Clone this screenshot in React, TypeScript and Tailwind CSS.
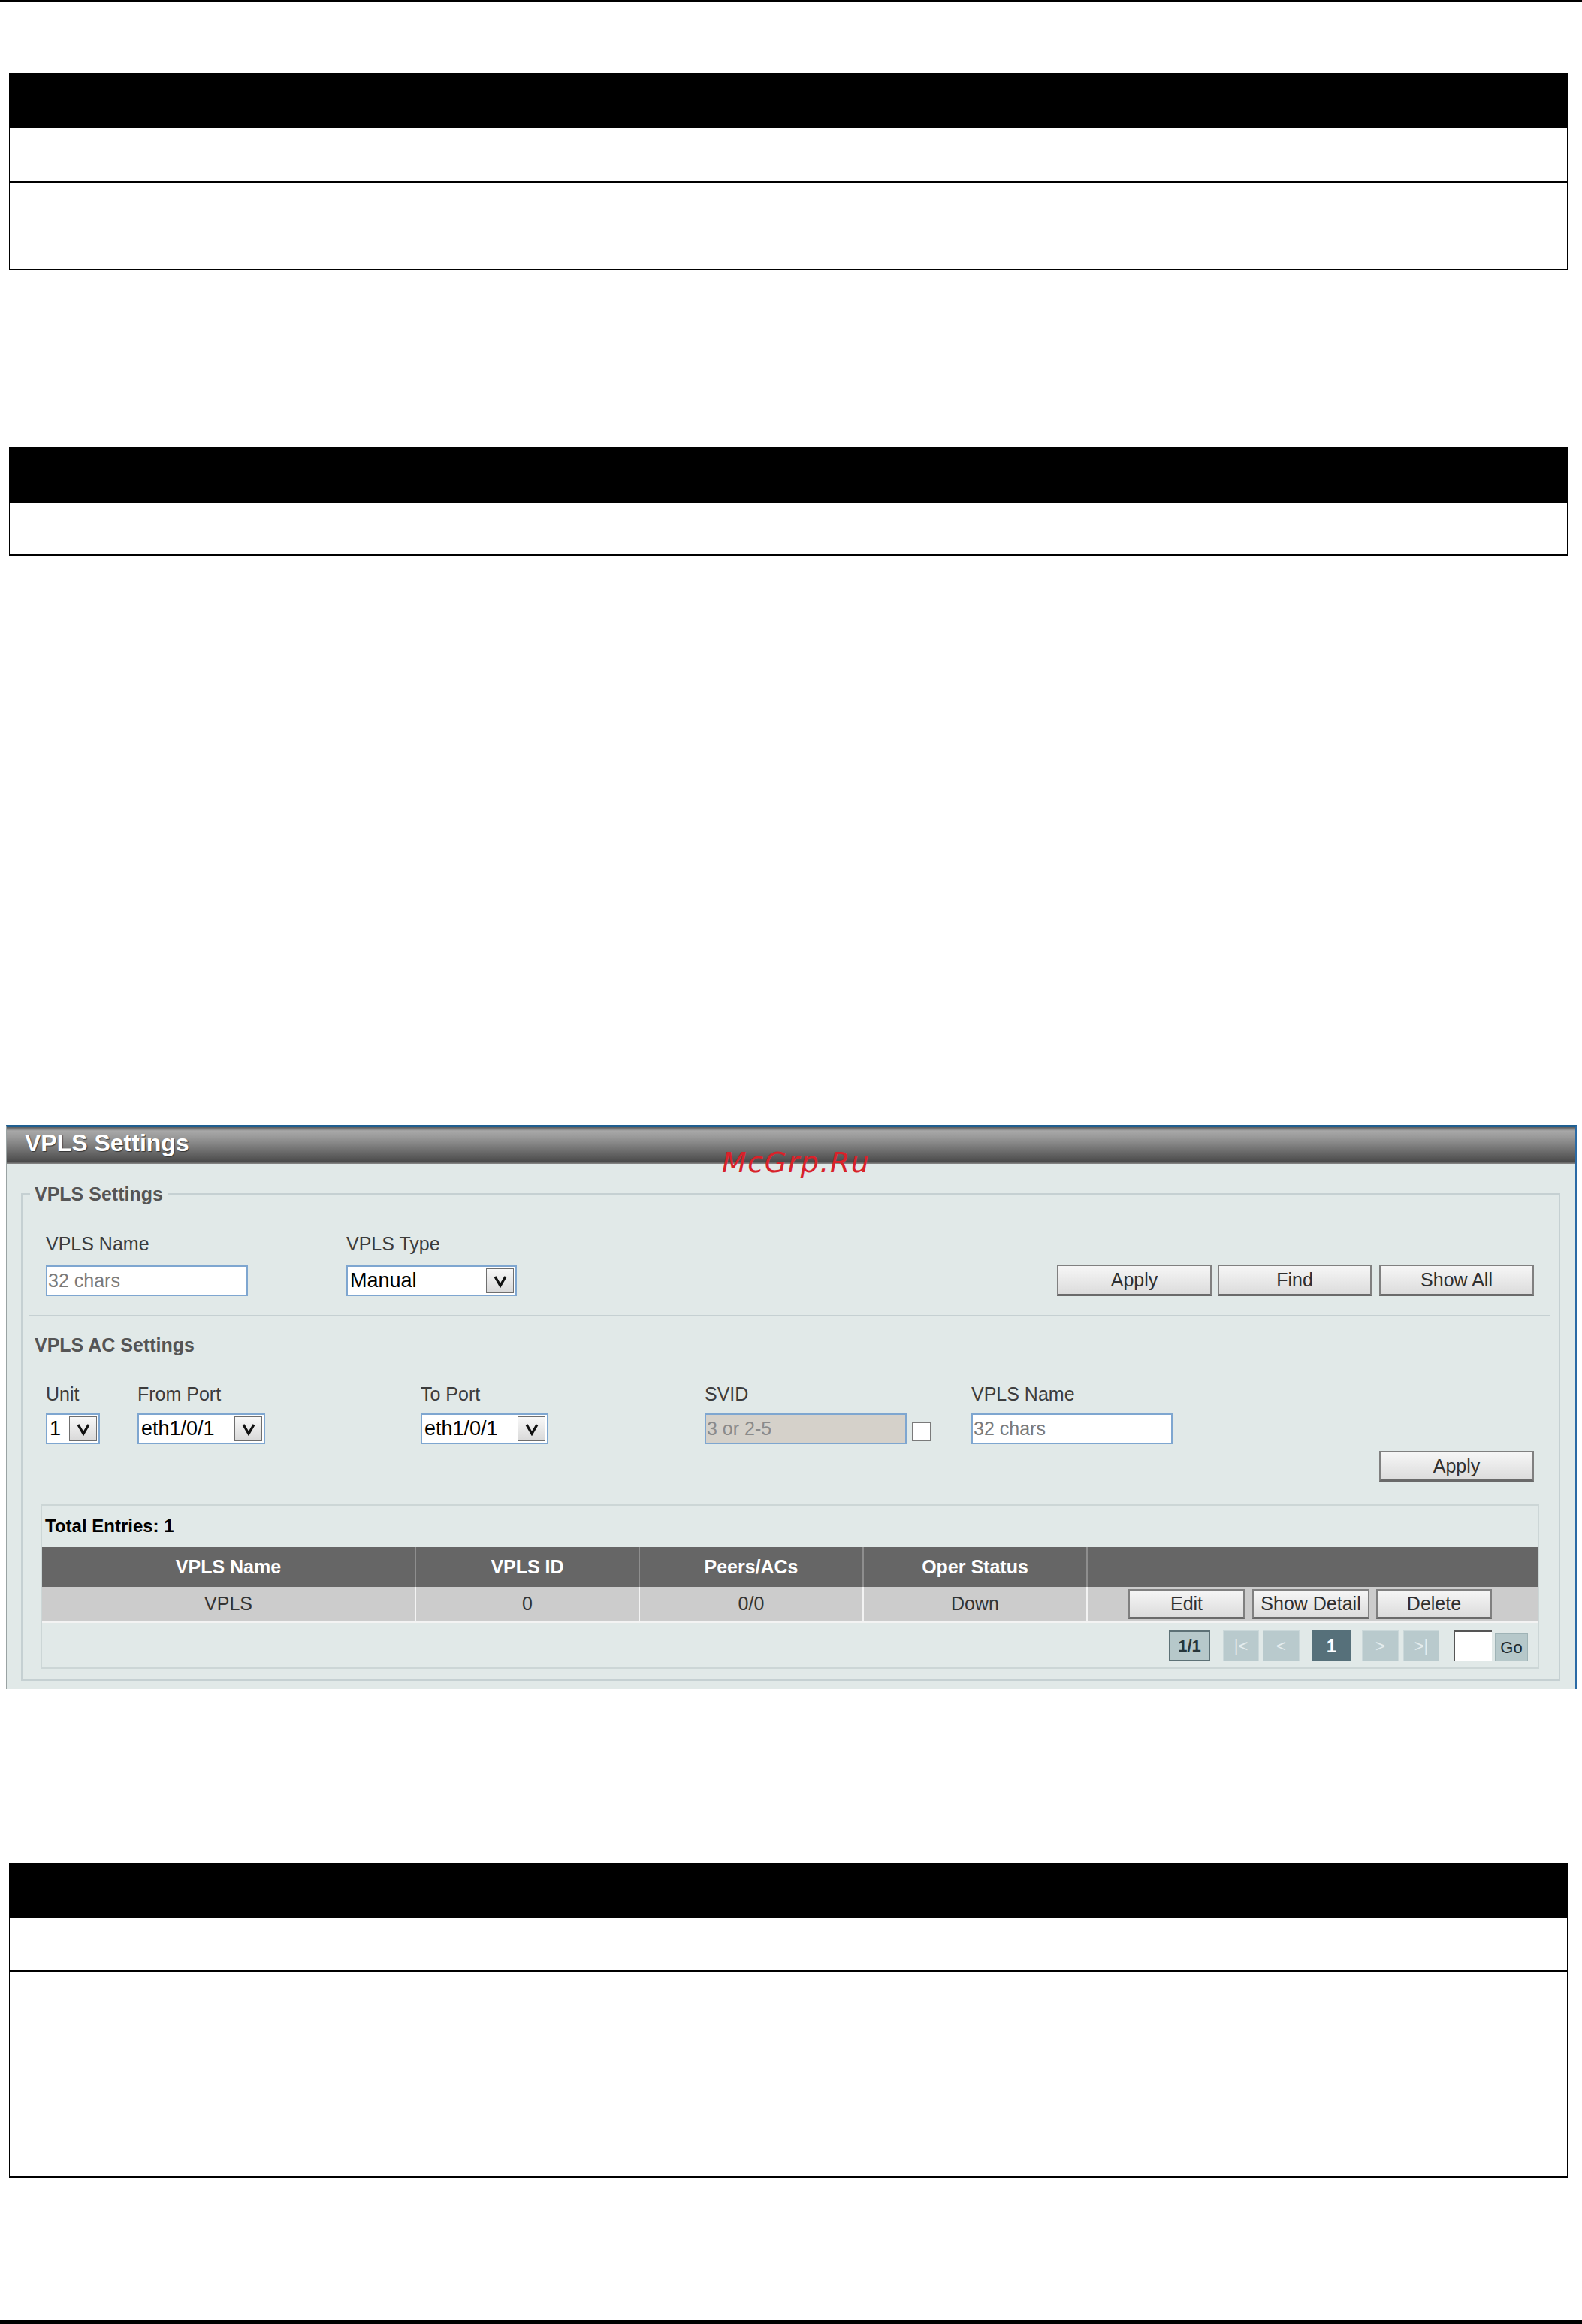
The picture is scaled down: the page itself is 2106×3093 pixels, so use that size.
import React from 'react';

// VPLS Settings page (manual screenshot) with the surrounding blank doc tables.

function Chevron() {
  return (
    <svg width="20" height="18" viewBox="0 0 20 18" className="block">
      <polyline points="3,3 10,15 17,3" fill="none" stroke="#111" strokeWidth="3.4" strokeLinejoin="miter" />
    </svg>
  );
}

function Select({ value, w }: { value: string; w: string }) {
  return (
    <div className={`${w} h-[41px] flex items-center bg-white border-2 border-[#7ea6d0] pl-[3px]`}>
      <span className="text-[27px] leading-none text-black">{value}</span>
      <span className="ml-auto mr-[2px] w-[37px] h-[33px] flex items-center justify-center border border-[#6f6f6f] bg-[linear-gradient(to_bottom,#f8f8f8,#d9d9d9)]">
        <Chevron />
      </span>
    </div>
  );
}

function TextBox({ text, w, disabled }: { text: string; w: string; disabled?: boolean }) {
  return (
    <div
      className={`${w} h-[41px] flex items-center border-2 border-[#7ea6d0] pl-[1px] text-[25px] leading-none ${
        disabled ? 'bg-[#d5d1ca] text-[#8a8a8a]' : 'bg-white text-[#7a7a7a]'
      }`}
    >
      {text}
    </div>
  );
}

function Btn({ label, w, h = 'h-[42px]' }: { label: string; w: string; h?: string }) {
  return (
    <div
      className={`${w} ${h} flex items-center justify-center border-2 border-[#808080] border-b-[3px] border-b-[#6a6a6a] bg-[linear-gradient(to_bottom,#f6f6f6,#dcdcdc)] text-[25px] leading-none text-[#2f2f2f]`}
    >
      {label}
    </div>
  );
}

function Label({ children }: { children: React.ReactNode }) {
  return <div className="text-[25px] leading-[28px] text-[#3c3c3c]">{children}</div>;
}

export default function App() {
  return (
    <div className="w-[2106px] h-[3093px] bg-white flex flex-col font-['Liberation_Sans',Arial,sans-serif] overflow-hidden">
      <div className="h-[3px] bg-black" />

      {/* table 1 */}
      <div className="mt-[94px] ml-[12px] w-[2076px] border-l border-r-2 border-black">
        <div className="h-[73px] bg-black" />
        <div className="grid grid-cols-[576px_1fr] h-[73px] border-b-2 border-black">
          <div className="border-r border-black" />
          <div />
        </div>
        <div className="grid grid-cols-[576px_1fr] h-[117px] border-b-2 border-black">
          <div className="border-r border-black" />
          <div />
        </div>
      </div>

      {/* table 2 */}
      <div className="mt-[235px] ml-[12px] w-[2076px] border-l border-r-2 border-black">
        <div className="h-[74px] bg-black" />
        <div className="grid grid-cols-[576px_1fr] h-[71px] border-b-[3px] border-black">
          <div className="border-r border-black" />
          <div />
        </div>
      </div>

      {/* VPLS Settings panel */}
      <div className="relative mt-[757px] ml-[8px] w-[2091px] h-[751px] bg-[#e1e9e8] border-t-[3px] border-t-[#1f5f90] border-r-2 border-r-[#2a6aa5] border-l border-l-[#9aa3a3]">
        <div className="h-[49px] pl-[24px] pt-[5px] bg-[linear-gradient(to_bottom,#5c5c5c_0px,#a8a8a8_5px,#9a9a9a_13px,#505050_44px,#4a4a4a_46px,#8a8a8a_49px)]">
          <span className="text-[32px] leading-[32px] font-bold text-white [text-shadow:1px_1px_1px_#333]">VPLS Settings</span>
        </div>

        <span className="absolute left-[952px] top-[28px] text-[38px] leading-none italic text-[#d8222a] tracking-[1.5px] font-['DejaVu_Sans',sans-serif]">
          McGrp.Ru
        </span>

        <div className="pt-[26px] pl-[19px] pr-[20px]">
          <fieldset className="border-2 border-[#c5d0d2] pb-[14px]">
            <legend className="ml-[10px] px-[6px] text-[25px] leading-[28px] font-bold text-[#555]">VPLS Settings</legend>

            <div className="pl-[31px] pr-[33px] pt-[38px] flex items-end">
              <div className="w-[400px]">
                <Label>VPLS Name</Label>
                <div className="mt-[15px]">
                  <TextBox text="32 chars" w="w-[269px]" />
                </div>
              </div>
              <div>
                <Label>VPLS Type</Label>
                <div className="mt-[15px]">
                  <Select value="Manual" w="w-[227px]" />
                </div>
              </div>
              <div className="ml-auto flex">
                <Btn label="Apply" w="w-[206px]" />
                <div className="ml-[8px]">
                  <Btn label="Find" w="w-[205px]" />
                </div>
                <div className="ml-[10px]">
                  <Btn label="Show All" w="w-[206px]" />
                </div>
              </div>
            </div>

            <div className="ml-[9px] mr-[12px] mt-[25px] h-[2px] bg-[#c5d0d2]" />

            <div className="pl-[16px] mt-[24px] text-[25px] leading-[28px] font-bold text-[#555]">VPLS AC Settings</div>

            <div className="pl-[31px] pr-[33px] mt-[37px]">
              <div className="flex">
                <div className="w-[122px]">
                  <Label>Unit</Label>
                  <div className="mt-[12px]">
                    <Select value="1" w="w-[72px]" />
                  </div>
                </div>
                <div className="w-[377px]">
                  <Label>From Port</Label>
                  <div className="mt-[12px]">
                    <Select value="eth1/0/1" w="w-[170px]" />
                  </div>
                </div>
                <div className="w-[378px]">
                  <Label>To Port</Label>
                  <div className="mt-[12px]">
                    <Select value="eth1/0/1" w="w-[170px]" />
                  </div>
                </div>
                <div className="w-[355px]">
                  <Label>SVID</Label>
                  <div className="mt-[12px] flex items-end">
                    <TextBox text="3 or 2-5" w="w-[269px]" disabled />
                    <div className="ml-[7px] mb-[4px] w-[26px] h-[26px] bg-white border-2 border-[#7a7a7a]" />
                  </div>
                </div>
                <div>
                  <Label>VPLS Name</Label>
                  <div className="mt-[12px]">
                    <TextBox text="32 chars" w="w-[268px]" />
                  </div>
                </div>
              </div>
              <div className="mt-[9px] flex justify-end">
                <Btn label="Apply" w="w-[206px]" h="h-[41px]" />
              </div>
            </div>

            <div className="ml-[24px] mr-[26px] mt-[30px] border-2 border-[#ccd6d6] pt-[13px] pb-[8px]">
              <div className="pl-[4px] text-[24px] leading-[28px] font-bold text-black">Total Entries: 1</div>

              <div className="mt-[14px] grid grid-cols-[498px_298px_298px_298px_1fr]">
                {['VPLS Name', 'VPLS ID', 'Peers/ACs', 'Oper Status', ''].map((h, i) => (
                  <div
                    key={i}
                    className={`h-[53px] bg-[#666666] flex items-center justify-center text-[25px] font-bold text-white ${
                      i < 4 ? 'border-r-2 border-[#8e8e8e]' : ''
                    }`}
                  >
                    {h}
                  </div>
                ))}
                {['VPLS', '0', '0/0', 'Down'].map((c, i) => (
                  <div
                    key={i}
                    className="h-[48px] bg-[#cccccc] border-r-2 border-b-2 border-[#f3f3f3] flex items-center justify-center text-[25px] text-[#333]"
                  >
                    {c}
                  </div>
                ))}
                <div className="h-[48px] bg-[#cccccc] border-b-2 border-[#f3f3f3] flex items-center pl-[54px]">
                  <Btn label="Edit" w="w-[155px]" h="h-[40px]" />
                  <div className="ml-[10px]">
                    <Btn label="Show Detail" w="w-[156px]" h="h-[40px]" />
                  </div>
                  <div className="ml-[9px]">
                    <Btn label="Delete" w="w-[154px]" h="h-[40px]" />
                  </div>
                </div>
              </div>

              <div className="mt-[10px] pr-[13px] flex justify-end items-end h-[41px]">
                <div className="w-[55px] h-[41px] flex items-center justify-center bg-[#b6c8ca] border-2 border-[#5d7176] text-[22px] font-bold text-[#26363a]">1/1</div>
                <div className="ml-[17px] w-[48px] h-[41px] flex items-center justify-center bg-[#b9cacd] border border-[#cbd8da] text-[22px] text-[#e4eced]">|&lt;</div>
                <div className="ml-[5px] w-[49px] h-[41px] flex items-center justify-center bg-[#b9cacd] border border-[#cbd8da] text-[22px] text-[#e4eced]">&lt;</div>
                <div className="ml-[16px] w-[53px] h-[41px] flex items-center justify-center bg-[#56707a] text-[24px] font-bold text-white">1</div>
                <div className="ml-[14px] w-[49px] h-[41px] flex items-center justify-center bg-[#b9cacd] border border-[#cbd8da] text-[22px] text-[#e4eced]">&gt;</div>
                <div className="ml-[6px] w-[48px] h-[41px] flex items-center justify-center bg-[#b9cacd] border border-[#cbd8da] text-[22px] text-[#e4eced]">&gt;|</div>
                <div className="ml-[19px] w-[51px] h-[41px] bg-white border-t-2 border-l-2 border-[#555]" />
                <div className="ml-[4px] w-[44px] h-[37px] flex items-center justify-center bg-[#b6c8ca] border border-[#9fb3b6] text-[22px] text-[#1f2a2c]">Go</div>
              </div>
            </div>
          </fieldset>
        </div>
      </div>

      {/* table 3 */}
      <div className="mt-[231px] ml-[12px] w-[2076px] border-l border-r-2 border-black">
        <div className="h-[74px] bg-black" />
        <div className="grid grid-cols-[576px_1fr] h-[71px] border-b-2 border-black">
          <div className="border-r border-black" />
          <div />
        </div>
        <div className="grid grid-cols-[576px_1fr] h-[275px] border-b-[3px] border-black">
          <div className="border-r border-black" />
          <div />
        </div>
      </div>

      <div className="mt-[189px] h-[5px] bg-black" />
    </div>
  );
}
